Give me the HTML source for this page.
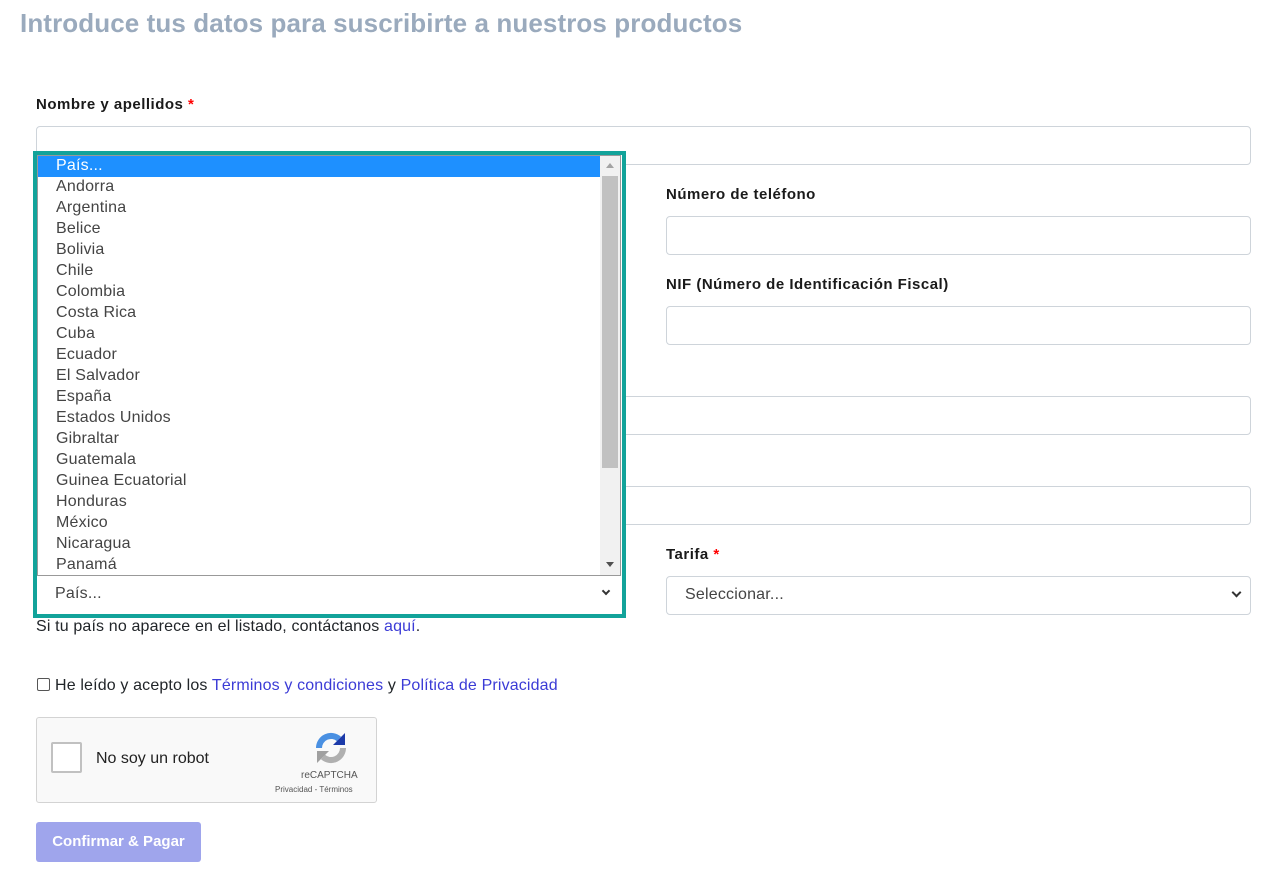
<!DOCTYPE html>
<html><head><meta charset="utf-8"><style>
*{box-sizing:border-box;margin:0;padding:0}
body{width:1262px;height:872px;background:#fff;font-family:"Liberation Sans",sans-serif;position:relative;overflow:hidden;color:#212529}
.a{position:absolute}
h1{position:absolute;left:20px;top:8px;font-size:26px;font-weight:bold;color:#9aaabd;white-space:nowrap;letter-spacing:0.1px}
.lbl{position:absolute;font-size:15px;font-weight:bold;color:#1a1a1a;letter-spacing:0.5px}
.lbl span{color:red}
.inp{position:absolute;border:1px solid #ced4da;border-radius:4px;background:#fff;height:39px}
.sel{font-size:16px;color:#444;padding:9px 0 0 18px;letter-spacing:0.2px}
.chev{position:absolute;right:10px;top:12px;width:7px;height:7px;border-right:2px solid #333;border-bottom:2px solid #333;transform:rotate(45deg)}
.list{position:absolute;left:37px;top:155px;width:584px;height:421px;background:#fff;border:1px solid #999;overflow:hidden}
.list div{height:21px;line-height:20px;padding-left:18px;font-size:16px;color:#444;letter-spacing:0.2px}
.list div.h{background:#1e90ff;color:#fff}
a{color:#3b3bd6;text-decoration:none}
.t{font-size:16px;letter-spacing:0.15px}
</style></head><body>
<h1>Introduce tus datos para suscribirte a nuestros productos</h1>
<div class="lbl" style="left:36px;top:96px">Nombre y apellidos <span>*</span></div>
<div class="inp" style="left:36px;top:126px;width:1215px"></div>
<div class="lbl" style="left:666px;top:186px">Número de teléfono</div>
<div class="inp" style="left:666px;top:216px;width:585px"></div>
<div class="lbl" style="left:666px;top:276px">NIF (Número de Identificación Fiscal)</div>
<div class="inp" style="left:666px;top:306px;width:585px"></div>
<div class="inp" style="left:600px;top:396px;width:651px"></div>
<div class="inp" style="left:600px;top:486px;width:651px"></div>
<div class="lbl" style="left:666px;top:546px">Tarifa <span>*</span></div>
<div class="inp sel" style="left:666px;top:576px;width:585px">Seleccionar...<i class="chev"></i></div>

<div class="a" style="left:33px;top:151px;width:593px;height:467px;border:4px solid #12a39a;background:#fff"></div>
<div class="inp sel" style="left:37px;top:577px;width:584px;height:37px;border:none;border-radius:0;padding-top:8px">País...<i class="chev" style="right:12px;top:11px;width:6px;height:6px"></i></div>
<div class="list">
<div class="h">País...</div><div>Andorra</div><div>Argentina</div><div>Belice</div><div>Bolivia</div><div>Chile</div><div>Colombia</div><div>Costa Rica</div><div>Cuba</div><div>Ecuador</div><div>El Salvador</div><div>España</div><div>Estados Unidos</div><div>Gibraltar</div><div>Guatemala</div><div>Guinea Ecuatorial</div><div>Honduras</div><div>México</div><div>Nicaragua</div><div>Panamá</div>
<span class="a" style="left:562px;top:0;width:20px;height:420px;background:#f1f1f1"></span>
<span class="a" style="left:564px;top:20px;width:16px;height:292px;background:#c1c1c1"></span>
<span class="a" style="left:568px;top:7px;border-left:4px solid transparent;border-right:4px solid transparent;border-bottom:5px solid #a3a3a3"></span>
<span class="a" style="left:568px;top:406px;border-left:4px solid transparent;border-right:4px solid transparent;border-top:5px solid #505050"></span>
</div>
<div class="a t" style="left:36px;top:618px;color:#212529">Si tu país no aparece en el listado, contáctanos <a>aquí</a>.</div>
<div class="a" style="left:37px;top:678px;width:13px;height:13px;border:1px solid #555;border-radius:2px"></div>
<div class="a t" style="left:55px;top:677px">He leído y acepto los <a>Términos y condiciones</a> y <a>Política de Privacidad</a></div>
<div class="a" style="left:36px;top:717px;width:341px;height:86px;background:#f9f9f9;border:1px solid #d3d3d3;border-radius:3px">
<div class="a" style="left:14px;top:24px;width:31px;height:31px;border:2px solid #c1c1c1;border-radius:2px;background:#fff"></div>
<div class="a" style="left:59px;top:32px;font-size:16px;color:#222">No soy un robot</div>
<svg class="a" style="left:276px;top:12px" width="36" height="36" viewBox="0 0 36 36"><path d="M6 18a12 12 0 0 1 20-9" stroke="#4a90e2" stroke-width="6" fill="none"/><path d="M26 9l6-6v12H20z" fill="#1c3aa9"/><path d="M30 18a12 12 0 0 1-20 9" stroke="#b0b0b0" stroke-width="6" fill="none"/><path d="M10 27l-6 6V21h12z" fill="#a0a0a0"/></svg>
<div class="a" style="left:264px;top:52px;font-size:10px;color:#555">reCAPTCHA</div>
<div class="a" style="left:238px;top:67px;font-size:8px;color:#555">Privacidad - Términos</div>
</div>
<div class="a" style="left:36px;top:822px;width:165px;height:40px;background:#9fa5ec;border-radius:3px;color:#fff;font-weight:bold;font-size:15px;text-align:center;line-height:40px">Confirmar &amp; Pagar</div>
</body></html>
